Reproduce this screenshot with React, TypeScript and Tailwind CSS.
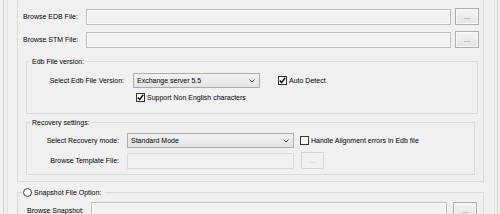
import React from "react";

function TextBox({ w, disabled }: { w: number; disabled?: boolean }) {
  return (
    <div
      style={{ width: w }}
      className={
        disabled
          ? "h-[16px] border border-[#d9d9d9] bg-[#f0f0f0]"
          : "h-[16px] border border-[#bdbdbd] bg-[#f1f1f1] shadow-[inset_0_0_0_1px_#fbfbfb]"
      }
    />
  );
}

function DotsButton({ w, disabled }: { w: number; disabled?: boolean }) {
  return (
    <div
      style={{ width: w }}
      className={
        disabled
          ? "h-[17px] border border-[#d3d3d3] bg-[#f0f0f0] flex items-end justify-center pb-[3px] text-[#a8a8a8] leading-[8px]"
          : "h-[17px] border border-[#adadad] bg-gradient-to-b from-[#f4f4f4] to-[#e4e4e4] shadow-[inset_0_0_0_1px_#f8f8f8] flex items-end justify-center pb-[3px] text-[#3a3a6a] leading-[8px]"
      }
    >
      ...
    </div>
  );
}

function Select({ w, value }: { w: number; value: string }) {
  return (
    <div
      style={{ width: w }}
      className="h-[15px] border border-[#acacac] bg-gradient-to-b from-[#f2f2f2] to-[#e3e3e3] flex items-center justify-between pl-[3px] pr-[3px] text-black"
    >
      <span className="leading-[9px]">{value}</span>
      <svg width="6" height="4" viewBox="0 0 6 4" className="mr-[1px]">
        <path d="M0.5 0.5 L3 3 L5.5 0.5" fill="none" stroke="#404040" strokeWidth="1" />
      </svg>
    </div>
  );
}

function CheckBox({ checked, label }: { checked?: boolean; label: string }) {
  return (
    <div className="flex items-center gap-[2px]">
      <div className="w-[9px] h-[9px] border border-[#333] bg-white flex items-center justify-center">
        {checked && (
          <svg width="7" height="7" viewBox="0 0 7 7">
            <path d="M0.8 3.6 L2.6 5.6 L6.2 0.8" fill="none" stroke="#111" strokeWidth="1.5" />
          </svg>
        )}
      </div>
      <span className="leading-[9px] text-black">{label}</span>
    </div>
  );
}

export default function App() {
  return (
    <div className="w-[500px] h-[214px] overflow-hidden bg-[#f0f0f0] font-['Liberation_Sans',Arial,sans-serif] text-[7px] text-black">
      <div className="ml-[3px] w-[495px] h-full border-x border-[#d2d2d2]">
        <div className="ml-[3px] w-[488px] h-full border-x border-[#e2e2e2]">
          {/* EDB option group (title scrolled above) */}
          <div className="ml-[9px] w-[467px] border-x border-b border-[#dadada] pb-[6px]">
            <div className="flex items-start pt-[8px]">
              <div className="w-[68px] pl-[5px] h-[17px] flex items-center leading-[9px]">Browse EDB File:</div>
              <div className="mt-[1px]">
                <TextBox w={365} />
              </div>
              <div className="ml-[4px]">
                <DotsButton w={24} />
              </div>
            </div>
            <div className="flex items-start mt-[6px]">
              <div className="w-[68px] pl-[5px] h-[17px] flex items-center leading-[9px]">Browse STM File:</div>
              <div className="mt-[1px]">
                <TextBox w={365} />
              </div>
              <div className="ml-[4px]">
                <DotsButton w={24} />
              </div>
            </div>

            <fieldset className="ml-[8px] mt-[9px] w-[452px] border border-[#dadada] pb-[11px]">
              <legend className="ml-[3px] px-[2px] h-[9px] leading-[9px]">Edb File version:</legend>
              <div className="flex items-center mt-[7px]">
                <div className="w-[97px] text-right leading-[9px]">Select Edb File Version:</div>
                <div className="ml-[9px]">
                  <Select w={127} value="Exchange server 5.5" />
                </div>
                <div className="ml-[18px]">
                  <CheckBox checked label="Auto Detect" />
                </div>
              </div>
              <div className="mt-[5px] ml-[109px]">
                <CheckBox checked label="Support Non English characters" />
              </div>
            </fieldset>

            <fieldset className="ml-[8px] mt-[4px] w-[449px] border border-[#dadada] pb-[5px]">
              <legend className="ml-[3px] px-[2px] h-[9px] leading-[9px]">Recovery settings:</legend>
              <div className="flex items-center mt-[6px]">
                <div className="w-[92px] text-right leading-[9px]">Select Recovery mode:</div>
                <div className="ml-[8px]">
                  <Select w={167} value="Standard Mode" />
                </div>
                <div className="ml-[6px]">
                  <CheckBox label="Handle Alignment errors in Edb file" />
                </div>
              </div>
              <div className="flex items-start mt-[4px]">
                <div className="w-[92px] h-[17px] flex items-center justify-end leading-[9px]">Browse Template File:</div>
                <div className="ml-[8px] mt-[1px]">
                  <TextBox w={167} disabled />
                </div>
                <div className="ml-[7px]">
                  <DotsButton w={23} disabled />
                </div>
              </div>
            </fieldset>
          </div>

          {/* Snapshot option group */}
          <fieldset className="ml-[9px] mt-[6px] w-[467px] border border-[#dadada] pb-[6px]">
            <legend className="ml-[4px] pl-[1px] pr-[4px] h-[9px] flex items-center gap-[2px]">
              <span className="w-[9px] h-[9px] rounded-full border border-[#444] bg-white" />
              <span className="leading-[9px]">Snapshot File Option:</span>
            </legend>
            <div className="flex items-start mt-[5px]">
              <div className="w-[73px] pl-[9px] h-[17px] flex items-center leading-[9px]">Browse Snapshot:</div>
              <div>
                <TextBox w={356} />
              </div>
              <div className="ml-[6px]">
                <DotsButton w={24} />
              </div>
            </div>
          </fieldset>
        </div>
      </div>
    </div>
  );
}
